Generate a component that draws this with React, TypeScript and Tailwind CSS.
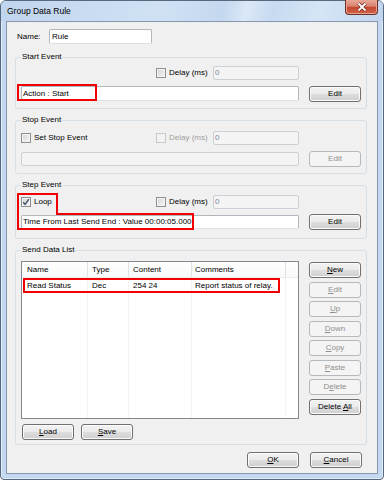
import React from "react";

const FONT = "font-['Liberation_Sans',Arial,sans-serif]";

function Mn({ text, at }: { text: string; at: number }) {
  if (at < 0) return <span className="whitespace-pre">{text}</span>;
  return (
    <span className="whitespace-pre">
      {text.slice(0, at)}
      <span className="underline underline-offset-[1px]">{text[at]}</span>
      {text.slice(at + 1)}
    </span>
  );
}

function Btn({
  label,
  at = -1,
  disabled = false,
  className = "",
}: {
  label: string;
  at?: number;
  disabled?: boolean;
  className?: string;
}) {
  return (
    <div
      className={`flex h-[16px] w-[52px] shrink-0 items-center justify-center rounded-[3px] border text-[8px] leading-none ${
        disabled
          ? "border-[#b5b9bc] bg-[#f4f4f4] text-[#8f8f8f]"
          : "border-[#707070] bg-[linear-gradient(to_bottom,#f2f2f2_0%,#ebebeb_48%,#dddddd_52%,#cfcfcf_100%)] text-black shadow-[inset_0_0_0_1px_#fbfbfb]"
      } ${className}`}
    >
      <Mn text={label} at={at} />
    </div>
  );
}

function Field({
  value = "",
  disabled = false,
  className = "",
}: {
  value?: string;
  disabled?: boolean;
  className?: string;
}) {
  return (
    <div
      className={`flex shrink-0 items-center rounded-[2px] border px-[1px] text-[8px] leading-none ${
        disabled
          ? "border-[#cdd0d4] bg-[#f4f4f4] text-[#7f8a99]"
          : "border-[#b3b6bc] border-b-[#dde1e7] bg-white text-black"
      } ${className}`}
    >
      {value}
    </div>
  );
}

function Check({ checked = false, disabled = false }: { checked?: boolean; disabled?: boolean }) {
  return (
    <div
      className={`flex h-[10px] w-[10px] shrink-0 items-center justify-center border ${
        disabled
          ? "border-[#c9c9c9] bg-[#f3f3f3]"
          : "border-[#8e8f8f] bg-[linear-gradient(135deg,#d4d4d4,#f6f6f6)] shadow-[inset_0_0_0_1px_#f4f4f4]"
      }`}
    >
      {checked && (
        <svg width="8" height="8" viewBox="0 0 8 8">
          <path d="M1.2 4.2 L3.1 6.4 L6.9 1.2" fill="none" stroke="#3d506c" strokeWidth="1.4" />
        </svg>
      )}
    </div>
  );
}

function Group({
  title,
  className = "",
  children,
}: {
  title: string;
  className?: string;
  children: React.ReactNode;
}) {
  return (
    <div className={`rounded-[3px] border border-[#d5dfe5] px-[5px] ${className}`}>
      <div className="-mt-[7px] h-[11px] leading-[11px]">
        <span className="bg-[#f0f0f0] px-[1px] text-[8px]">{title}</span>
      </div>
      {children}
    </div>
  );
}

const columns = [
  { name: "Name", w: "w-[66px]", pl: "pl-[5px]", val: "Read Status" },
  { name: "Type", w: "w-[41px]", pl: "pl-[4px]", val: "Dec" },
  { name: "Content", w: "w-[63px]", pl: "pl-[4px]", val: "254 24" },
  { name: "Comments", w: "w-[94px]", pl: "pl-[3px]", val: "Report status of relay." },
];

const listButtons = [
  { label: "New", at: 0, disabled: false, mt: "mt-[1px]" },
  { label: "Edit", at: 0, disabled: true, mt: "mt-[4px]" },
  { label: "Up", at: 0, disabled: true, mt: "mt-[3px]" },
  { label: "Down", at: 0, disabled: true, mt: "mt-[4px]" },
  { label: "Copy", at: 0, disabled: true, mt: "mt-[3px]" },
  { label: "Paste", at: 0, disabled: true, mt: "mt-[4px]" },
  { label: "Delete", at: 1, disabled: true, mt: "mt-[3px]" },
  { label: "Delete All", at: 7, disabled: false, mt: "mt-[4px]" },
];

function ListView() {
  return (
    <div className="flex h-[158px] w-[278px] shrink-0 border border-[#828790] bg-white">
      {columns.map((c) => (
        <div key={c.name} className={`flex flex-col ${c.w}`}>
          <div
            className={`flex h-[16px] items-center border-r border-b border-r-[#dfe3e8] border-b-[#eeeeee] bg-[linear-gradient(to_bottom,#ffffff,#f7f8f9)] ${c.pl}`}
          >
            {c.name}
          </div>
          <div className="flex-1 border-r border-r-[#f3f3f3]">
            <div className={`flex h-[15px] items-center whitespace-nowrap ${c.pl}`}>{c.val}</div>
          </div>
        </div>
      ))}
      <div className="flex flex-1 flex-col">
        <div className="h-[16px] border-b border-b-[#eeeeee] bg-[linear-gradient(to_bottom,#ffffff,#f7f8f9)]" />
      </div>
    </div>
  );
}

export default function App() {
  return (
    <div className={`relative h-[480px] w-[384px] overflow-hidden bg-white text-black ${FONT}`}>
      <div className="flex h-[480px] w-[384px] flex-col rounded-t-[6px] rounded-b-[4px] border border-[#56697f] bg-[#c4d8ef] shadow-[inset_0_0_0_1px_#dfeaf7]">
        {/* title bar */}
        <div className="flex h-[20px] shrink-0 items-center rounded-t-[5px] bg-[linear-gradient(105deg,#c0d5ee_0%,#d0e1f4_42%,#c4d8ef_58%,#dbe8f7_64%,#c7daf0_71%,#d6e5f6_83%,#c0d5ee_100%)] pl-[6px]">
          <span className="text-[8.5px] leading-none">Group Data Rule</span>
          <div className="-mt-[1px] mr-[5px] ml-auto flex h-[15px] w-[33px] items-center justify-center self-start rounded-b-[4px] border border-t-0 border-[#6e2f25] bg-[linear-gradient(to_bottom,#eaa899_0%,#d9806d_45%,#c4482f_52%,#d0634a_100%)] shadow-[inset_0_0_0_1px_#e9a493]">
            <svg width="12" height="10" viewBox="0 0 12 10">
              <path d="M2.5 1.5 L9.5 8.5 M9.5 1.5 L2.5 8.5" stroke="#6b2a20" strokeWidth="3.2" />
              <path d="M2.5 1.5 L9.5 8.5 M9.5 1.5 L2.5 8.5" stroke="#ffffff" strokeWidth="1.8" />
            </svg>
          </div>
        </div>

        {/* client area */}
        <div className="mx-[5px] flex h-[453px] shrink-0 flex-col border border-[#8698ae] bg-[#f0f0f0] pt-[7px] pr-[10px] pl-[8px] text-[8px] leading-none">
          <div className="flex h-[15px] items-center pl-[2px]">
            <span className="w-[32px]">Name:</span>
            <Field className="h-[15px] w-[103px] pl-[2px]" value="Rule" />
          </div>

          <Group title="Start Event" className="mt-[13px] pb-[6px]">
            <div className="mt-[4px] flex h-[14px] w-[278px] items-center">
              <div className="w-[135px]" />
              <Check />
              <span className="ml-[3px]">Delay (ms)</span>
              <Field disabled className="ml-auto h-[14px] w-[86px]" value="0" />
            </div>
            <div className="mt-[6px] flex items-start gap-[10px]">
              <Field className="h-[15px] w-[278px]" value="Action : Start" />
              <Btn label="Edit" />
            </div>
          </Group>

          <Group title="Stop Event" className="mt-[11px] pb-[6px]">
            <div className="mt-[6px] flex h-[14px] w-[278px] items-center">
              <div className="flex w-[135px] items-center">
                <Check />
                <span className="ml-[3px]">Set Stop Event</span>
              </div>
              <Check disabled />
              <span className="ml-[3px] text-[#a0a0a0]">Delay (ms)</span>
              <Field disabled className="ml-auto h-[14px] w-[86px]" value="0" />
            </div>
            <div className="mt-[6px] flex items-center gap-[10px]">
              <Field disabled className="h-[14px] w-[278px]" />
              <Btn label="Edit" disabled />
            </div>
          </Group>

          <Group title="Step Event" className="mt-[11px] pb-[8px]">
            <div className="mt-[5px] flex h-[14px] w-[278px] items-center">
              <div className="flex w-[135px] items-center">
                <Check checked />
                <span className="ml-[3px]">Loop</span>
              </div>
              <Check />
              <span className="ml-[3px]">Delay (ms)</span>
              <Field disabled className="ml-auto h-[14px] w-[86px]" value="0" />
            </div>
            <div className="mt-[5px] flex items-center gap-[10px]">
              <Field className="h-[14px] w-[278px]" value="Time From Last Send End : Value 00:00:05.000" />
              <Btn label="Edit" />
            </div>
          </Group>

          <Group title="Send Data List" className="mt-[11px] pb-[4px]">
            <div className="mt-[6px] flex items-start gap-[10px]">
              <ListView />
              <div className="flex flex-col">
                {listButtons.map((b) => (
                  <Btn key={b.label} label={b.label} at={b.at} disabled={b.disabled} className={b.mt} />
                ))}
              </div>
            </div>
            <div className="mt-[5px] flex gap-[7px] pl-[1px]">
              <Btn label="Load" at={0} />
              <Btn label="Save" at={0} />
            </div>
          </Group>

          <div className="mt-[7px] flex justify-end gap-[11px] pr-[5px]">
            <Btn label="OK" at={0} />
            <Btn label="Cancel" at={0} />
          </div>
        </div>
      </div>

      {/* red annotations */}
      <div className="pointer-events-none absolute top-[84px] left-[17px] h-[17px] w-[80px] border-2 border-[#f00000]" />
      <div className="pointer-events-none absolute top-[278px] left-[23px] h-[15px] w-[257px] border-2 border-[#f00000]" />
      <svg className="pointer-events-none absolute top-0 left-0" width="384" height="480">
        <path d="M18 194 H57 V214 H193 V229 H18 Z" fill="none" stroke="#f00000" strokeWidth="2" />
      </svg>
    </div>
  );
}
